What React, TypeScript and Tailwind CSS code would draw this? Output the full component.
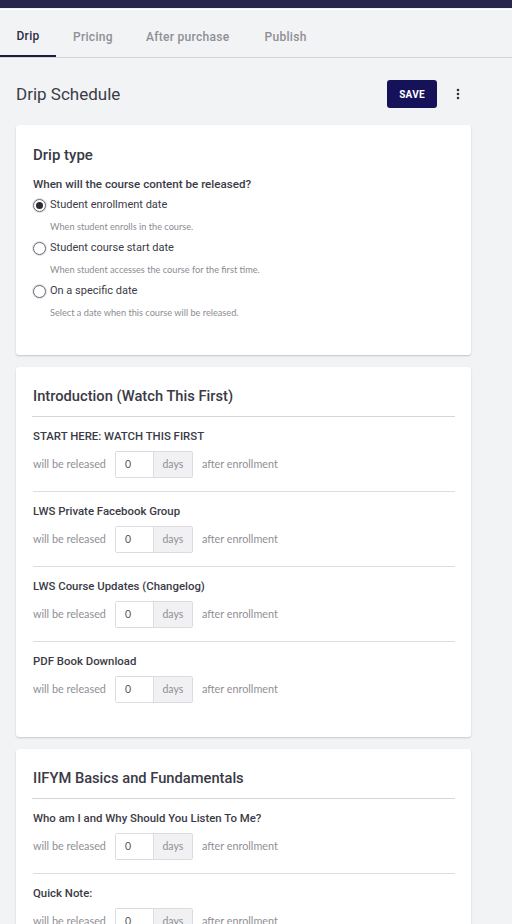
import React from "react";

const head = { fontFamily: "Roboto, 'Noto Sans', sans-serif" };
const body = { fontFamily: "Lato, 'Open Sans', sans-serif" };

function Radio({ checked }: { checked?: boolean }) {
  return (
    <span className="flex h-[13px] w-[13px] items-center justify-center rounded-full border border-[#6b6b73] bg-white shadow-[0_0_0_1px_#e4e4e8]">
      {checked && <span className="h-[7px] w-[7px] rounded-full bg-[#2b2b33]" />}
    </span>
  );
}

function Option({ label, desc, checked }: { label: string; desc: string; checked?: boolean }) {
  return (
    <div className="mb-[5px]">
      <div className="flex h-[18px] items-center gap-[4px]">
        <Radio checked={checked} />
        <span className="text-[11px] text-[#3b3b47]" style={head}>{label}</span>
      </div>
      <div className="mt-[6px] h-[14px] pl-[17px] text-[9.2px] leading-[14px] text-[#8c8c92]" style={body}>{desc}</div>
    </div>
  );
}

function Item({ title, last }: { title: string; last?: boolean }) {
  return (
    <div className={last ? "pt-[11px] pb-[34px]" : "border-b border-[#dedee2] pt-[11px] pb-[13px]"}>
      <div className="h-4 text-[11.4px] font-medium leading-4 text-[#3b3b47]" style={head}>{title}</div>
      <div className="mt-[7px] flex h-[27px] items-center">
        <span className="text-[10.8px] text-[#8f8f95]" style={body}>will be released</span>
        <div className="ml-[9px] flex h-[27px] rounded-[2px] border border-[#dcdce0]">
          <div className="flex w-[37px] items-center bg-white pl-[9px] text-[10.5px] text-[#55555c]" style={body}>0</div>
          <div className="flex w-[39px] items-center justify-center border-l border-[#dcdce0] bg-[#f1f1f3] text-[10.5px] text-[#8f8f95]" style={body}>days</div>
        </div>
        <span className="ml-[9px] text-[10.8px] text-[#8f8f95]" style={body}>after enrollment</span>
      </div>
    </div>
  );
}

function Section({ title, items }: { title: string; items: string[] }) {
  return (
    <div className="mt-3 rounded-[3px] bg-white px-[16px] pt-[18px] shadow-[0_1px_2px_rgba(0,0,0,0.18)]">
      <div className="border-b border-[#d6d6da] pb-[11px] pl-[1px]">
        <div className="h-5 pt-[1px] text-[14.7px] font-medium leading-5 text-[#3a3a46]" style={head}>{title}</div>
      </div>
      <div className="pl-[1px]">
        {items.map((t, i) => (
          <Item key={t} title={t} last={i === items.length - 1} />
        ))}
      </div>
    </div>
  );
}

export default function App() {
  return (
    <div className="min-h-[924px] bg-[#f2f3f5]">
      <div className="h-2 bg-[#28274b]" />
      <div className="h-[1px] bg-[#f2f3f5]" />
      <div className="h-[1px] bg-white" />
      <div className="flex h-[48px] border-b border-[#d5d6db] tracking-[0.3px]" style={head}>
        <div className="flex w-[56px] items-center justify-center border-b-2 border-[#1d1b45] pt-[6px] text-[12px] font-medium text-[#2d2d45]">Drip</div>
        <div className="flex items-center pl-[17px] pr-4 pt-[6px] text-[12px] font-medium text-[#8e8f96]">Pricing</div>
        <div className="flex items-center pl-[17px] pr-4 pt-[6px] text-[12px] font-medium text-[#8e8f96]">After purchase</div>
        <div className="flex items-center pl-[19px] pr-4 pt-[6px] text-[12px] font-medium text-[#8e8f96]">Publish</div>
      </div>
      <div className="pl-4 pr-[41px]">
        <div className="mt-[22px] flex h-[28px] items-center">
          <div className="flex-1 pt-[2px] text-[17px] text-[#3b3b47]" style={head}>Drip Schedule</div>
          <button className="flex h-[28px] w-[50px] items-center justify-center rounded-[3px] bg-[#15125a] pt-[1px] text-[10px] font-bold tracking-wide text-white" style={head}>SAVE</button>
          <div className="ml-[8px] flex w-[26px] items-center justify-center">
            <svg width="4" height="12" viewBox="0 0 4 12">
              <circle cx="2" cy="2" r="1.3" fill="#333" />
              <circle cx="2" cy="6" r="1.3" fill="#333" />
              <circle cx="2" cy="10" r="1.3" fill="#333" />
            </svg>
          </div>
        </div>
        <div className="mt-[17px] rounded-[3px] bg-white px-[17px] pt-[20px] pb-[30px] shadow-[0_1px_2px_rgba(0,0,0,0.2)]">
          <div className="h-5 text-[15px] font-medium leading-5 text-[#3a3a46]" style={head}>Drip type</div>
          <div className="mt-[11px] h-4 text-[11.6px] font-medium leading-4 text-[#3b3b47]" style={head}>When will the course content be released?</div>
          <div className="mt-[4px]">
            <Option checked label="Student enrollment date" desc="When student enrolls in the course." />
            <Option label="Student course start date" desc="When student accesses the course for the first time." />
            <Option label="On a specific date" desc="Select a date when this course will be released." />
          </div>
        </div>
        <Section
          title="Introduction (Watch This First)"
          items={["START HERE: WATCH THIS FIRST", "LWS Private Facebook Group", "LWS Course Updates (Changelog)", "PDF Book Download"]}
        />
        <Section
          title="IIFYM Basics and Fundamentals"
          items={["Who am I and Why Should You Listen To Me?", "Quick Note:", "Macros Explained"]}
        />
      </div>
    </div>
  );
}
